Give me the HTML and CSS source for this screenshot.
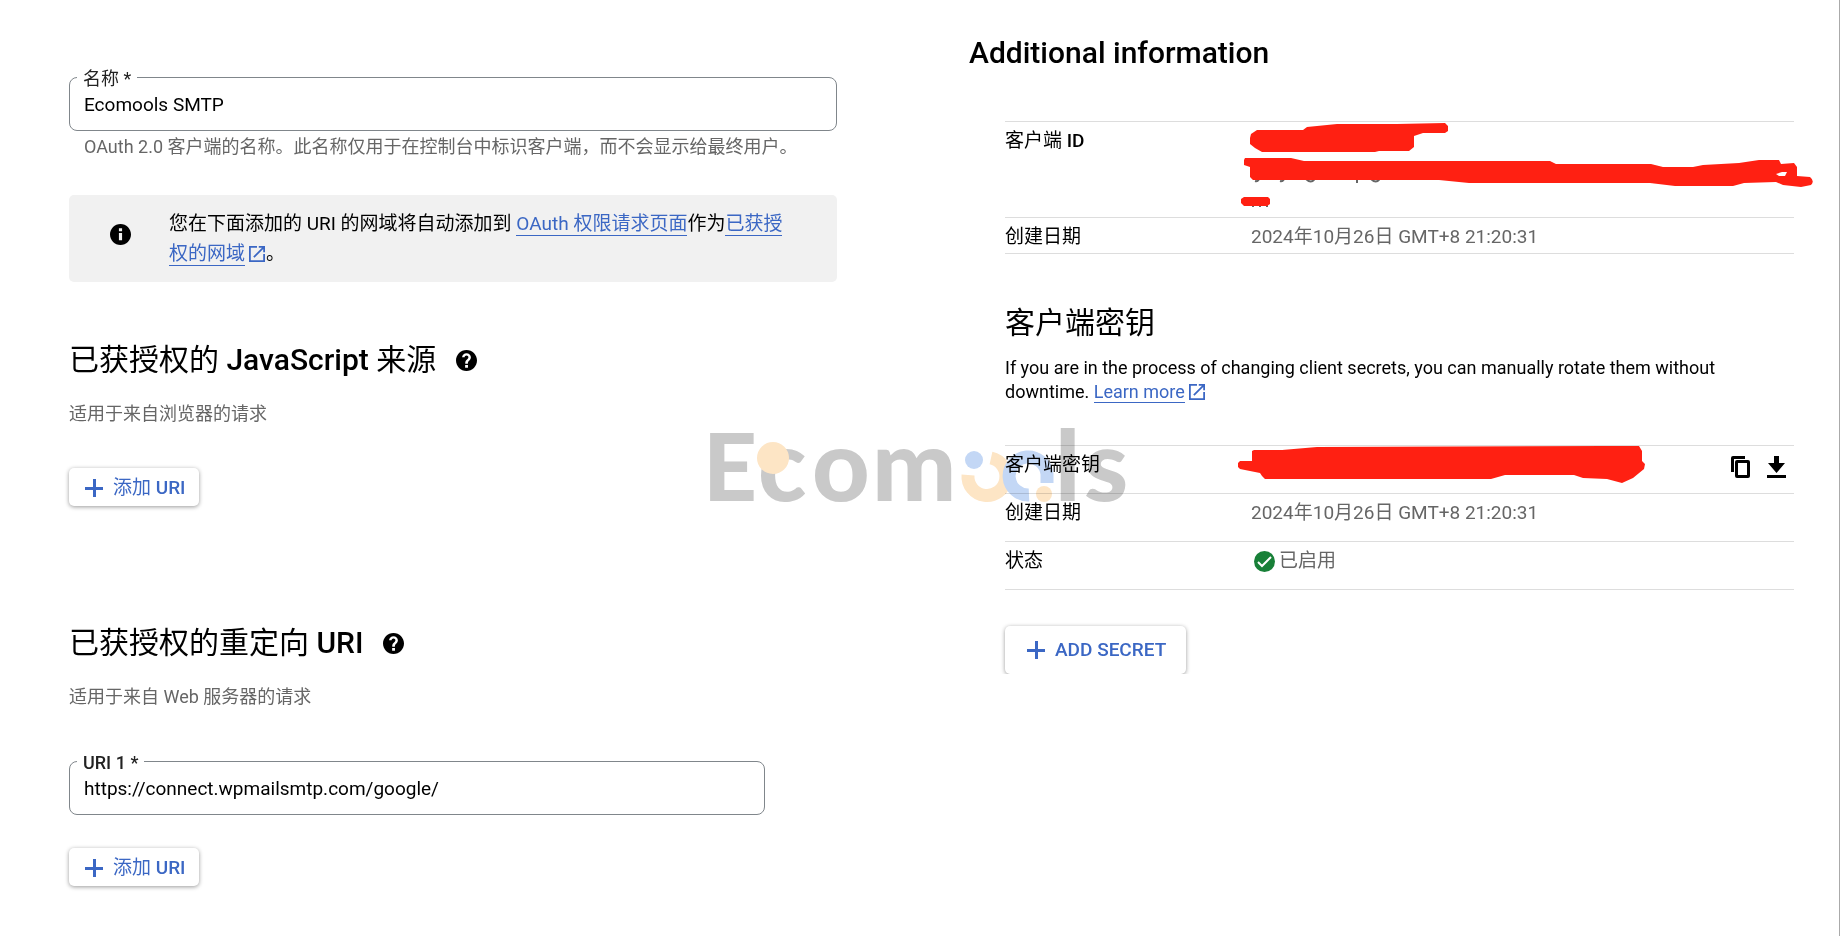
FILE: index.html
```html
<!DOCTYPE html>
<html lang="zh-CN">
<head>
    <meta charset="UTF-8">
    <meta name="viewport" content="width=device-width, initial-scale=1.0">
    <title>Ecomools SMTP</title>
    <link rel="stylesheet" href="styles.css">
</head>
<body>
    <main class="page">
        <form class="settings">
            <div class="field">
                <label for="clientName">名称 *</label>
                <input id="clientName" type="text" value="Ecomools SMTP">
            </div>
            <p class="field-hint">OAuth 2.0 客户端的名称。此名称仅用于在控制台中标识客户端，而不会显示给最终用户。</p>

            <div class="notice">
                <svg class="icon" viewBox="2 2 20 20"><path d="M12 2C6.48 2 2 6.48 2 12s4.48 10 10 10 10-4.48 10-10S17.52 2 12 2zm1.500 15.500h-3v-7h3v7zm0-8.500h-3V6h3v3z"/></svg>
                <p>您在下面添加的 URI 的网域将自动添加到 <a href="#">OAuth 权限请求页面</a>作为<a href="#">已获授权的网域</a><svg class="icon-open" viewBox="3 3 18 18"><path d="M19 19H5V5h7V3H3v18h18v-9h-2v7zM14 3v2h3.590l-9.830 9.830 1.410 1.410L19 6.410V10h2V3h-7z"/></svg>。</p>
            </div>

            <section class="origins">
                <h2><span>已获授权的 <b>JavaScript</b> 来源</span>
                    <svg class="icon" viewBox="2 2 20 20"><path d="M12 2C6.480 2 2 6.480 2 12s4.480 10 10 10 10-4.480 10-10S17.520 2 12 2zm1.400 17h-2.700v-2.600h2.700V19zm2-7.700-.9.900c-.8.800-1.200 1.400-1.200 2.800h-2.500v-.6c0-1.100.5-2.100 1.200-2.800l1.200-1.300c.4-.3.600-.8.600-1.300 0-1-.8-1.700-1.800-1.700s-1.800.7-1.800 1.700H7.800C7.800 6.700 9.700 5 12 5s4.200 1.700 4.200 4c0 .9-.3 1.700-.8 2.300z"/></svg>
                </h2>
                <p class="hint">适用于来自浏览器的请求</p>
                <button type="button" class="btn"><svg class="icon-plus" viewBox="0 0 18 18"><path d="M8 0h3v8h7v3h-7v7H8v-7H0V8h8z"/></svg><span>添加 <b>URI</b></span></button>
            </section>

            <section class="redirects">
                <h2><span>已获授权的重定向 <b>URI</b></span>
                    <svg class="icon" viewBox="2 2 20 20"><path d="M12 2C6.480 2 2 6.480 2 12s4.480 10 10 10 10-4.480 10-10S17.520 2 12 2zm1.400 17h-2.700v-2.600h2.700V19zm2-7.700-.9.900c-.8.800-1.200 1.400-1.200 2.800h-2.500v-.6c0-1.100.5-2.100 1.200-2.800l1.200-1.300c.4-.3.600-.8.600-1.300 0-1-.8-1.700-1.800-1.700s-1.800.7-1.800 1.700H7.800C7.800 6.700 9.700 5 12 5s4.200 1.700 4.200 4c0 .9-.3 1.700-.8 2.300z"/></svg>
                </h2>
                <p class="hint">适用于来自 Web 服务器的请求</p>
                <div class="field">
                    <label for="uri1"><b>URI 1 *</b></label>
                    <input id="uri1" type="text" value="https://connect.wpmailsmtp.com/google/">
                </div>
                <button type="button" class="btn"><svg class="icon-plus" viewBox="0 0 18 18"><path d="M8 0h3v8h7v3h-7v7H8v-7H0V8h8z"/></svg><span>添加 <b>URI</b></span></button>
            </section>
        </form>

        <aside class="info">
            <h2><b>Additional information</b></h2>
            <div class="info-body">
                <table class="client">
                    <tr class="client-id">
                        <th scope="row">客户端 <b>ID</b></th>
                        <td>
                            <svg class="scribble" width="572" height="90" viewBox="0 0 572 90">
                                <g fill="none" stroke="#666" stroke-width="2">
                                    <path d="M19 56q-1 6-5 5M44 56q-1 6-5 5M65 59q5 5 9 0M116 54v9M130 59q5 5 9 0M12 80v7M19 80v7M26 80v7"/>
                                </g>
                                <path d="M10 14l6-4h46l4-3 30-3h60l48-1 3 3v5l-3 2h-22l-9 3v11l-5 4h-30l-4 1H21l-7-4-5-4v-6z"/>
                                <path d="M4 38h46l13 3h246l6 3h95l12 3h30l10-2 36-2 20-3h20l2 4 13-1 3 4v9l13 1q5 4 1 8l-10 2-18-2-7-3-32 1-11 3h-58l-25-3H228l-30-3H12l-3-3V47l-6-2v-5z"/>
                                <path d="M3 77h24l2 2v5l-3 2H3l-3-3v-4z"/>
                                <path class="gap" d="M535 54l6-2h5l-2 4h-6z"/>
                            </svg>
                        </td>
                    </tr>
                    <tr>
                        <th scope="row">创建日期</th>
                        <td>2024年10月26日 GMT+8 21:20:31</td>
                    </tr>
                </table>

                <h3>客户端密钥</h3>
                <p class="about">If you are in the process of changing client secrets, you can manually rotate them without downtime. <a href="#">Learn more</a><svg class="icon-open" viewBox="3 3 18 18"><path d="M19 19H5V5h7V3H3v18h18v-9h-2v7zM14 3v2h3.590l-9.830 9.830 1.410 1.410L19 6.410V10h2V3h-7z"/></svg></p>

                <table class="secret">
                    <tr>
                        <th scope="row">客户端密钥</th>
                        <td>
                            <svg class="scribble" width="410" height="44" viewBox="0 0 410 44">
                                <path d="M2 15h12V5l2-1h28l35-3 288-1h34l3 5v10l3 3-1 5-11 9-11 5-15-4-24-1-9-3h-69l-14 4H27l-3-3-2-3-20-4-2-2v-4z"/>
                            </svg>
                            <div class="actions">
                                <button type="button" aria-label="复制"><svg width="19" height="22" viewBox="0 0 19 22"><path d="M14 0H2Q0 0 0 2v14h3V3h11zM17 4H6Q4 4 4 6v14q0 2 2 2h11q2 0 2-2V6q0-2-2-2zm-1 15H7V7h9z"/></svg></button>
                                <button type="button" aria-label="下载"><svg width="19" height="22" viewBox="0 0 19 22"><path d="M7 0h5v7h6L9.500 17 1 7h6zM0 19h19v3H0z"/></svg></button>
                            </div>
                        </td>
                    </tr>
                    <tr>
                        <th scope="row">创建日期</th>
                        <td>2024年10月26日 GMT+8 21:20:31</td>
                    </tr>
                    <tr>
                        <th scope="row">状态</th>
                        <td><span class="status"><svg class="icon" viewBox="0 0 21 21"><circle cx="10.500" cy="10.500" r="10.500"/><path d="M4 11l4 4 9-9"/></svg>已启用</span></td>
                    </tr>
                </table>
                <button type="button" class="btn btn-secret"><svg class="icon-plus" viewBox="0 0 18 18"><path d="M8 0h3v8h7v3h-7v7H8v-7H0V8h8z"/></svg><b>ADD SECRET</b></button>
            </div>
        </aside>

        <svg class="watermark" width="440" height="84" viewBox="0 0 440 84" role="img" aria-label="Ecomools">
            <text class="cap" x="-1" y="73">E</text>
            <text x="54 108 168 351 380" y="73">comls</text>
            <circle class="peach" cx="69" cy="30" r="16"/>
            <circle class="blue" cx="270" cy="32" r="9"/>
            <path class="peach-line" d="M264 47a19 19 0 1 0 23-17"/>
            <path class="blue-line" d="M325 67a19 19 0 1 1 18-21v9"/>
            <circle class="peach" cx="340" cy="66" r="8"/>
        </svg>
    </main>
</body>
</html>
```
FILE: styles.css
```css
* {
    box-sizing: border-box;
}
body {
    margin: 0;
    background: #fff;
    color: #000;
    font-family: Roboto, "Noto Sans CJK SC", sans-serif;
    font-size: 19px;
    line-height: 24px;
}
h2, h3, p {
    margin: 0;
}
h2, h3 {
    font-size: 30px;
    font-weight: 400;
    line-height: 40px;
}
b {
    font-weight: 500;
}
a {
    color: #3b67c4;
    text-decoration: none;
    border-bottom: 1px solid #3b67c4;
}
button, input {
    font: inherit;
}
.page {
    position: relative;
    display: grid;
    grid-template-columns: minmax(0, 768fr) minmax(0, 825fr);
    column-gap: 132px;
    min-height: 100vh;
    padding: 32px 45px 48px 69px;
    border-right: 1px solid #aaa;
}
.settings {
    padding-top: 45px;
}
.field {
    position: relative;
    height: 54px;
}
.field label {
    position: absolute;
    top: -10px;
    left: 8px;
    padding: 0 6px;
    background: #fff;
    color: #222;
    font-size: 18px;
    line-height: 24px;
}
.field input {
    width: 100%;
    height: 100%;
    padding: 0 14px;
    border: 1px solid #80868b;
    border-radius: 8px;
    background: #fff;
    color: #000;
}
.field-hint {
    margin-top: 4px;
    padding-left: 15px;
    color: #666;
    font-size: 18px;
}
.notice {
    display: flex;
    align-items: flex-start;
    margin-top: 36px;
    padding: 14px 40px 13px 41px;
    gap: 38px;
    border-radius: 5px;
    background: #f1f1f1;
    line-height: 30px;
}
.icon {
    flex: none;
    width: 21px;
    height: 21px;
}
.notice .icon {
    margin-top: 15px;
}
.icon-open {
    width: 16px;
    height: 16px;
    margin: 0 1px 0 4px;
    vertical-align: -2px;
    fill: #3b67c4;
}
.origins {
    margin-top: 58px;
}
.redirects {
    margin-top: 117px;
}
.settings h2 {
    display: flex;
    align-items: center;
    gap: 20px;
}
.hint {
    margin-top: 22px;
    color: #666;
    font-size: 18px;
}
.btn {
    display: flex;
    align-items: center;
    gap: 10px;
    height: 38px;
    padding: 1px 13px 0 16px;
    border: 0;
    border-radius: 5px;
    background: #fff;
    box-shadow: 0 1px 4px rgba(0, 0, 0, .4);
    color: #3b67c4;
}
.origins .btn {
    margin-top: 42px;
}
.redirects .field {
    margin-top: 52px;
    margin-right: 72px;
}
.redirects .btn {
    margin-top: 33px;
}
.icon-plus {
    width: 18px;
    height: 18px;
    fill: #3b67c4;
}
.info h2 {
    line-height: 42px;
}
.info-body {
    padding: 47px 0 0 36px;
}
table {
    width: 100%;
    border-collapse: collapse;
    table-layout: fixed;
}
tr {
    border-top: 1px solid #ddd;
    border-bottom: 1px solid #ddd;
}
th {
    width: 246px;
    padding: 0;
    text-align: left;
    font-weight: 400;
    vertical-align: top;
}
td {
    position: relative;
    padding: 0;
    color: #666;
    vertical-align: top;
}
.client th, .client td {
    padding-top: 7px;
    height: 36px;
}
.client .client-id th, .client .client-id td {
    height: 96px;
}
.info h3 {
    margin-top: 49px;
}
.about {
    margin-top: 13px;
    font-size: 18px;
}
.secret {
    margin-top: 41px;
}
.secret th, .secret td {
    height: 48px;
    padding-top: 7px;
}
.scribble {
    position: absolute;
    top: 0;
    left: -13px;
    fill: #ff2012;
}
.client .scribble {
    top: -2px;
    left: -10px;
}
.scribble .gap {
    fill: #fff;
}
.actions {
    display: flex;
    justify-content: flex-end;
    gap: 17px;
    padding: 3px 8px 0 0;
}
.actions button {
    display: flex;
    padding: 0;
    border: 0;
    background: none;
}
.status {
    display: flex;
    align-items: center;
    gap: 4px;
    padding-left: 3px;
}
.status circle {
    fill: #188038;
}
.status path {
    fill: none;
    stroke: #fff;
    stroke-width: 2;
}
.btn-secret {
    height: 48px;
    margin-top: 36px;
    padding: 0 20px 0 22px;
    clip-path: inset(-6px -6px 0 -6px);
}
.watermark {
    position: absolute;
    top: 428px;
    left: 704px;
    mix-blend-mode: multiply;
}
.watermark text {
    fill: #c9c9c9;
    font-family: Lato, sans-serif;
    font-size: 100px;
    font-weight: 900;
}
.watermark .cap {
    font-size: 94px;
}
.watermark .peach {
    fill: #fde5c5;
}
.watermark .blue {
    fill: #c3d7f5;
}
.watermark .peach-line, .watermark .blue-line {
    fill: none;
    stroke: #fde5c5;
    stroke-width: 13;
}
.watermark .blue-line {
    stroke: #c3d7f5;
}
```
